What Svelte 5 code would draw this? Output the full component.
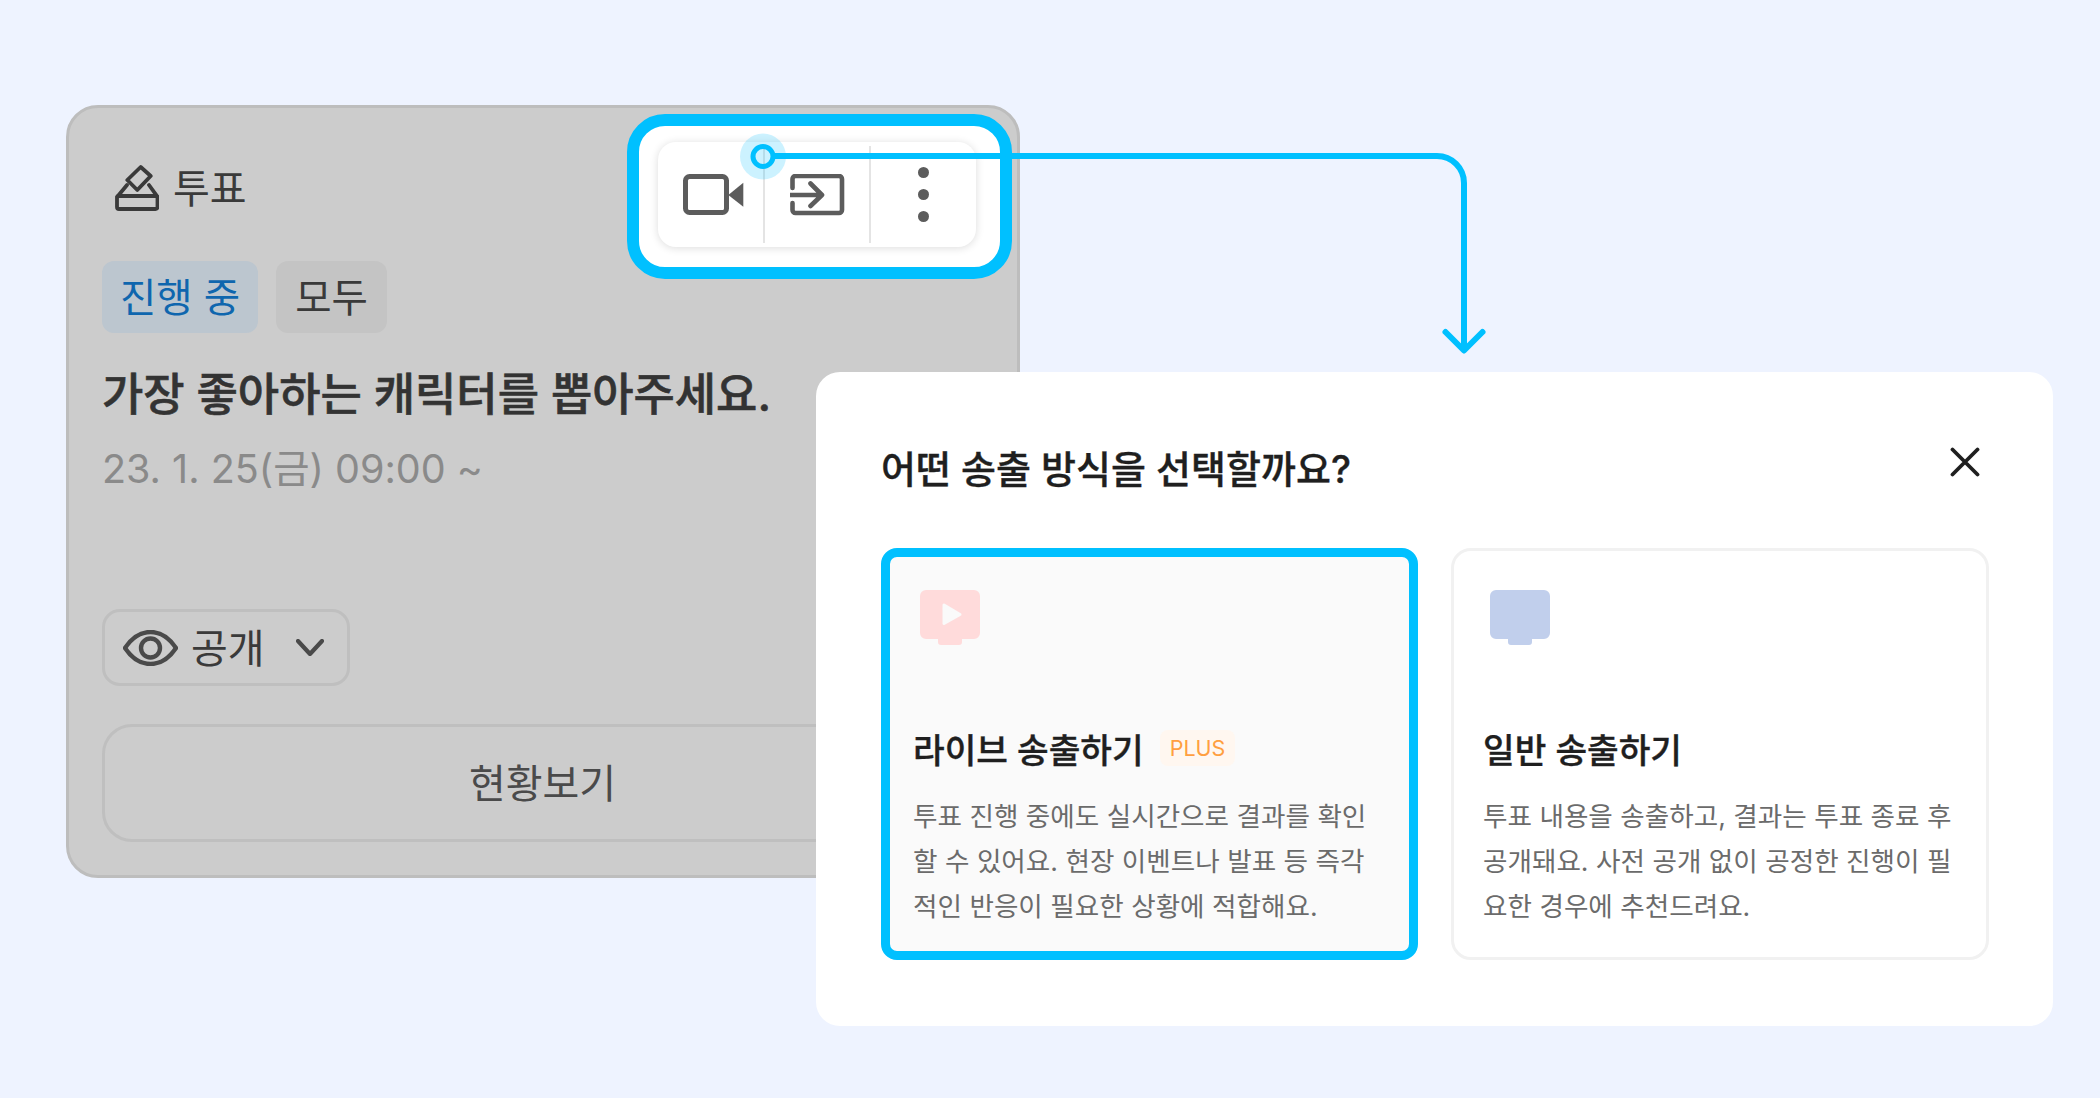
<script>
  const options = [
    {
      title: "라이브 송출하기",
      plus: true,
      selected: true,
      lines: [
        "투표 진행 중에도 실시간으로 결과를 확인",
        "할 수 있어요. 현장 이벤트나 발표 등 즉각",
        "적인 반응이 필요한 상황에 적합해요.",
      ],
    },
    {
      title: "일반 송출하기",
      plus: false,
      selected: false,
      lines: [
        "투표 내용을 송출하고, 결과는 투표 종료 후",
        "공개돼요. 사전 공개 없이 공정한 진행이 필",
        "요한 경우에 추천드려요.",
      ],
    },
  ];
</script>

<div class="stage">
  <section class="vote">
    <div class="vote-label">
      <svg width="44" height="46" viewBox="0 0 44 46" fill="none" stroke="#3a3a3a" stroke-width="3.8" stroke-linejoin="round" stroke-linecap="round">
        <path d="M25.7 2 35.7 11 22.3 25 12.3 15Z" />
        <path d="M12 20 2.3 31.7M34 20 42.4 31.7" />
        <rect x="2" y="31" width="40.5" height="13" rx="2" />
      </svg>
      <span>투표</span>
    </div>

    <div class="tags">
      <span class="tag tag-live">진행 중</span>
      <span class="tag">모두</span>
    </div>

    <h2>가장 좋아하는 캐릭터를 뽑아주세요.</h2>
    <p class="date">23. 1. 25(금) 09:00 ~</p>

    <div class="select">
      <svg width="55" height="36" viewBox="0 0 55 36" fill="none" stroke="#4a4a4a" stroke-width="4.4">
        <path d="M2 18C10 6 18 2 27.5 2S45 6 53 18C45 30 37 34 27.5 34S10 30 2 18Z" />
        <circle cx="27.5" cy="18" r="9.500" />
      </svg>
      <span>공개</span>
      <svg class="chevron" width="28" height="17" viewBox="0 0 28 17" fill="none" stroke="#4a4a4a" stroke-width="4.2" stroke-linecap="round" stroke-linejoin="round">
        <path d="M2 2 14 15 26 2" />
      </svg>
    </div>

    <button class="status">현황보기</button>

    <div class="highlight">
      <div class="toolbar">
        <div class="tool">
          <svg width="62" height="42" viewBox="0 0 62 42">
            <rect x="2.500" y="2.500" width="41" height="36" rx="4" fill="none" stroke="#5c5c5c" stroke-width="5" />
            <path d="M45.300 21 60.300 8.700V32.700Z" fill="#5c5c5c" />
          </svg>
        </div>
        <div class="tool">
          <svg width="55" height="42" viewBox="0 0 55 42" fill="none" stroke="#5c5c5c" stroke-width="4.600" stroke-linecap="round" stroke-linejoin="round">
            <path d="M2.500 14V5a3 3 0 0 1 3-3H49a3 3 0 0 1 3 3V36a3 3 0 0 1-3 3H5.500a3 3 0 0 1-3-3V29" />
            <path d="M1 21H32M20.500 9.500 32 21 20.500 32" />
          </svg>
        </div>
        <div class="tool dots">
          <i></i><i></i><i></i>
        </div>
      </div>
    </div>
  </section>

  <section class="modal">
    <div class="modal-head">
      <h3>어떤 송출 방식을 선택할까요?</h3>
      <svg class="close" width="30" height="30" viewBox="0 0 30 30" fill="none" stroke="#1f1f1f" stroke-width="3.800" stroke-linecap="round">
        <path d="M2.500 2.500 27.500 27.500M27.500 2.500 2.500 27.500" />
      </svg>
    </div>

    <div class="options">
      {#each options as opt}
        <article class="option" class:selected={opt.selected}>
          <svg class="screen" width="60" height="55" viewBox="0 0 60 55">
            <path fill={opt.selected ? "#ffdbdb" : "#c1cfec"} d="M6 0H54a6 6 0 0 1 6 6V43a6 6 0 0 1-6 6H42V52a3 3 0 0 1-3 3H21a3 3 0 0 1-3-3V49H6a6 6 0 0 1-6-6V6a6 6 0 0 1 6-6Z" />
            {#if opt.selected}
              <path fill="#fafafa" stroke="#fafafa" stroke-width="3" stroke-linejoin="round" d="M24 15V33.500L40 24.500Z" />
            {/if}
          </svg>
          <div class="option-title">
            <h4>{opt.title}</h4>
            {#if opt.plus}<span class="plus">PLUS</span>{/if}
          </div>
          <p>
            {#each opt.lines as line}
              <span>{line}</span>
            {/each}
          </p>
        </article>
      {/each}
    </div>
  </section>

  <svg class="connector" width="2100" height="1098" viewBox="0 0 2100 1098" fill="none">
    <circle cx="763" cy="156.500" r="23" fill="#00c0ff" fill-opacity="0.2" />
    <circle cx="763" cy="156.500" r="10" stroke="#00c0ff" stroke-width="5" />
    <path stroke="#00c0ff" stroke-width="6" d="M773 156H1437a27 27 0 0 1 27 27V349" />
    <path stroke="#00c0ff" stroke-width="6" stroke-linecap="round" stroke-linejoin="round" d="M1445.500 332 1464 350.500 1482.500 332" />
  </svg>
</div>

<style>
  :global(body) {
    background: #eef3ff;
    font-family: Inter, "Noto Sans CJK KR", sans-serif;
  }

  .stage {
    position: relative;
    width: 2100px;
    height: 1098px;
    padding: 105px 0 0 66px;
    box-sizing: border-box;
    overflow: hidden;
  }

  .vote {
    position: relative;
    box-sizing: border-box;
    width: 954px;
    height: 773px;
    padding: 57px 34px 0 33px;
    background: #cccccc;
    border: 3px solid #bdbdbd;
    border-radius: 32px;
    color: #3a3a3a;
  }

  .vote-label {
    display: flex;
    align-items: center;
    gap: 14px;
    margin-left: 13px;
    height: 46px;
    font-size: 40px;
  }

  .vote-label span {
    margin-top: -5px;
  }

  .tags {
    display: flex;
    gap: 18px;
    margin-top: 50px;
  }

  .tag {
    display: flex;
    align-items: center;
    height: 72px;
    padding: 0 18px 5px;
    box-sizing: border-box;
    font-size: 39.500px;
    background: #c4c4c4;
    border-radius: 12px;
  }

  .tag + .tag {
    padding: 0 19px 5px;
  }

  .tag-live {
    background: #bcc6cf;
    color: #0f66ae;
  }

  h2 {
    margin: 32px 0 0;
    font-size: 44.900px;
    line-height: 60px;
    font-weight: 500;
    -webkit-text-stroke: 0.6px #333333;
    color: #333333;
    white-space: nowrap;
  }

  .date {
    margin: 19px 0 0;
    font-size: 39.500px;
    line-height: 50px;
    color: #8a8a8a;
  }

  .select {
    display: flex;
    align-items: center;
    box-sizing: border-box;
    width: 248px;
    height: 77px;
    margin-top: 115px;
    padding-left: 18px;
    font-size: 40px;
    border: 3px solid #bfbfbf;
    border-radius: 18px;
    gap: 13px;
  }

  .select span {
    margin-top: -3px;
  }

  .chevron {
    margin-left: 18px;
  }

  .status {
    display: block;
    box-sizing: border-box;
    width: 100%;
    height: 118px;
    margin-top: 38px;
    padding-bottom: 5px;
    font: inherit;
    font-size: 40px;
    color: #4a4a4a;
    background: none;
    border: 3px solid #bfbfbf;
    border-radius: 30px;
  }

  .highlight {
    position: absolute;
    top: 6px;
    right: 5px;
    box-sizing: border-box;
    width: 385px;
    height: 165px;
    padding: 16px 24px 20px 19px;
    background: #fff;
    border: 12px solid #00c0ff;
    border-radius: 38px;
  }

  .toolbar {
    display: grid;
    grid-template-columns: 105px 106px 1fr;
    height: 105px;
    background: #fff;
    border-radius: 18px;
    box-shadow: 0 1px 8px rgba(0, 0, 0, 0.14);
  }

  .tool {
    display: flex;
    align-items: center;
    justify-content: center;
    margin: 4px 0;
    padding-left: 7px;
    box-sizing: border-box;
  }

  .tool + .tool {
    border-left: 2px solid #e4e4e4;
    padding-left: 0;
  }

  .dots {
    flex-direction: column;
    gap: 11px;
  }

  .dots i {
    width: 11px;
    height: 11px;
    background: #5c5c5c;
    border-radius: 50%;
  }

  .modal {
    position: absolute;
    left: 816px;
    top: 372px;
    width: 1237px;
    height: 654px;
    box-sizing: border-box;
    padding: 64px 64px 66px 65px;
    background: #fff;
    border-radius: 24px;
    color: #1f1f1f;
  }

  .modal-head {
    display: flex;
    justify-content: space-between;
    align-items: center;
    height: 62px;
  }

  h3 {
    margin: -2px 0 0;
    font-size: 38px;
    font-weight: 500;
    -webkit-text-stroke: 0.35px #1f1f1f;
  }

  .close {
    margin: -10px 9px 0 0;
  }

  .options {
    display: grid;
    grid-template-columns: 537px 538px;
    gap: 33px;
    margin-top: 50px;
  }

  .option {
    box-sizing: border-box;
    height: 412px;
    padding: 39px 20px 0 29px;
    border: 3px solid #f1f1f1;
    border-radius: 20px;
  }

  .option.selected {
    padding: 33px 20px 0 23px;
    background: #fafafa;
    border: 9px solid #00c0ff;
    border-radius: 16px;
  }

  .screen {
    display: block;
    margin-left: 7px;
  }

  .option-title {
    display: flex;
    align-items: center;
    gap: 16px;
    margin-top: 81px;
    height: 44px;
  }

  h4 {
    margin: 0;
    font-size: 34.400px;
    font-weight: 500;
    -webkit-text-stroke: 0.35px #1f1f1f;
  }

  .plus {
    display: flex;
    align-items: center;
    height: 36px;
    padding: 0 10px;
    font-size: 21.500px;
    color: #ff9f40;
    background: #fff7f0;
    border-radius: 8px;
  }

  .option p {
    margin: 24px 0 0;
    font-size: 26.600px;
    line-height: 45px;
    color: #6b6b6b;
    white-space: nowrap;
  }

  .option p span {
    display: block;
  }

  .connector {
    position: absolute;
    inset: 0;
    pointer-events: none;
  }
</style>
